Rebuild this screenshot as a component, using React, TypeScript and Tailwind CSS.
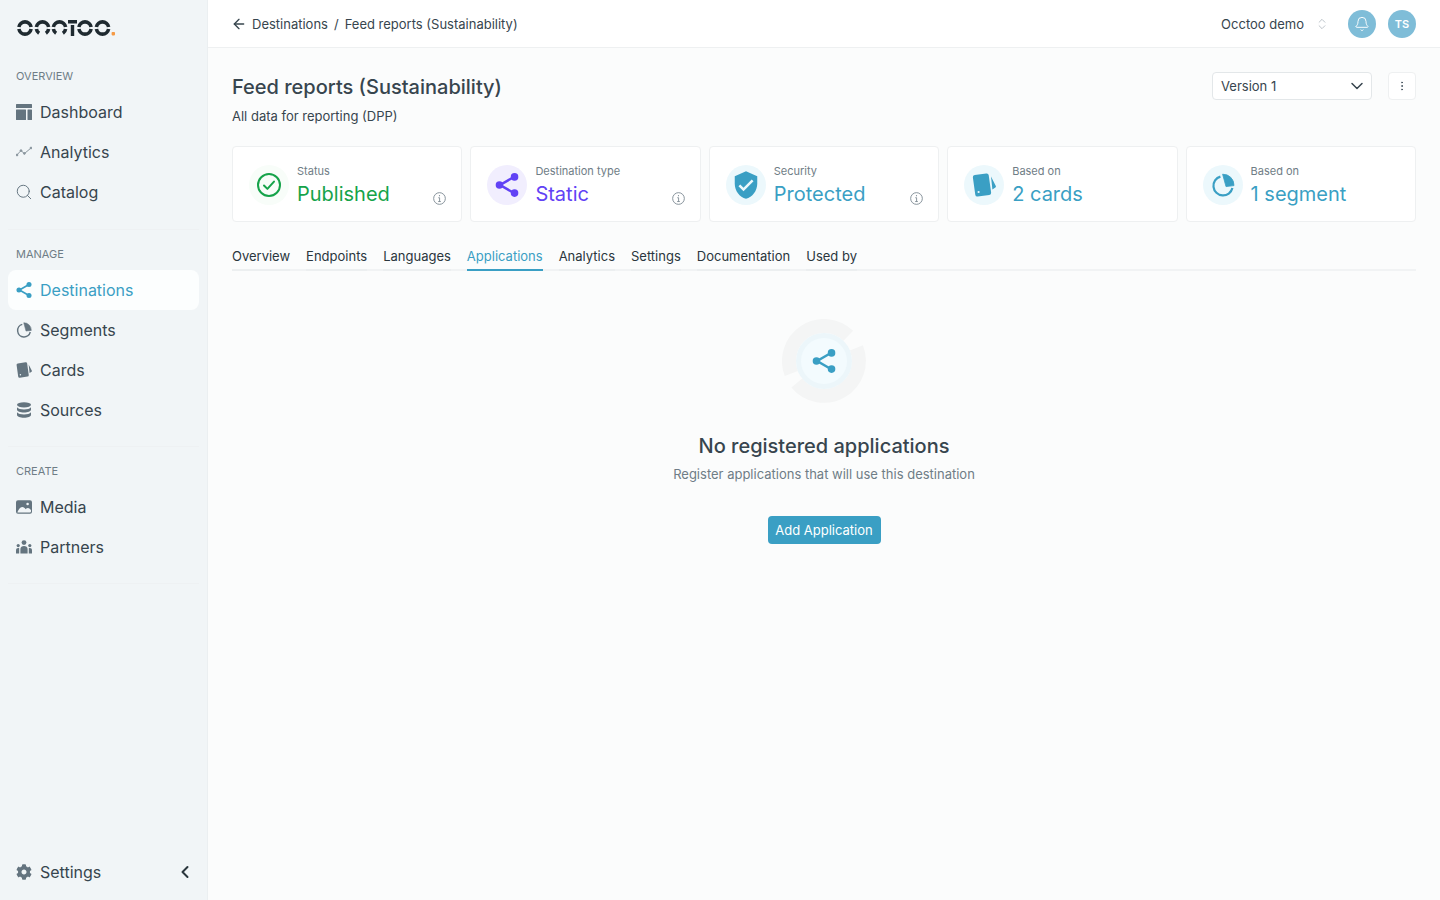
import React from "react";
import { FaCog } from "react-icons/fa";
import { MdVerifiedUser } from "react-icons/md";
import { ArrowLeft, Bell, ChevronDown, ChevronLeft, ChevronsUpDown, MoreVertical, Search } from "lucide-react";

const ShareIcon = ({ className = "" }: { className?: string }) => (
  <svg viewBox="2 1.5 20 21" className={className} fill="currentColor" stroke="currentColor">
    <path d="M18 5 6 12l12 7" fill="none" strokeWidth="2.2" />
    <circle cx="18.6" cy="4.9" r="3.3" stroke="none" />
    <circle cx="5.4" cy="12" r="3.3" stroke="none" />
    <circle cx="18.6" cy="19.1" r="3.3" stroke="none" />
  </svg>
);

const DashboardIcon = () => (
  <svg viewBox="0 0 16 16" className="h-4 w-4 text-[#64747f]" fill="currentColor">
    <rect x="0" y="0" width="16" height="4" rx="0.5" />
    <rect x="0" y="5.5" width="10" height="10.5" rx="0.5" />
    <rect x="11.5" y="5.5" width="4.5" height="10.5" rx="0.5" />
  </svg>
);

const AnalyticsIcon = () => (
  <svg viewBox="0 0 16 16" className="h-4 w-4 text-[#8a969e]" fill="none" stroke="currentColor" strokeWidth="1">
    <path d="M0.8 11 5 6.6l3.4 3L15 4" />
    <circle cx="1" cy="11" r="0.9" fill="currentColor" />
    <circle cx="5" cy="6.6" r="0.9" fill="currentColor" />
    <circle cx="8.4" cy="9.4" r="0.9" fill="currentColor" />
    <circle cx="15" cy="4" r="0.9" fill="currentColor" />
  </svg>
);

const SegmentIcon = ({ className = "" }: { className?: string }) => (
  <svg viewBox="0 0 24 24" className={className} fill="none" stroke="currentColor">
    <path d="M9.4 3.6A9.6 9.6 0 1 0 21.4 15" strokeWidth="2.2" />
    <path d="M11.6 1.2A11 11 0 0 1 23 12.6L15 13.6Z" fill="currentColor" stroke="currentColor" strokeWidth="0.8" strokeLinejoin="round" />
  </svg>
);

const CardsIcon = ({ className = "" }: { className?: string }) => (
  <svg viewBox="0 0 24 24" className={className} fill="currentColor">
    <rect x="2" y="1.2" width="16" height="21.6" rx="2.2" transform="rotate(-8 10 12)" />
    <path d="M19 3.6 23.8 13c.3.6.1 1.2-.4 1.5l-3 2.1Z" />
    <circle cx="6.6" cy="19" r="1.1" fill="#ecf8fc" />
  </svg>
);

const DbIcon = () => (
  <svg viewBox="0 0 16 16" className="h-4 w-4 text-[#64747f]" fill="currentColor">
    <ellipse cx="8" cy="2.8" rx="7" ry="2.6" />
    <path d="M1 5.2c1.2 1.5 3.8 2.2 7 2.2s5.8-.7 7-2.2v2.6c0 1.5-3.1 2.7-7 2.7s-7-1.2-7-2.7Z" />
    <path d="M1 10.2c1.2 1.5 3.8 2.2 7 2.2s5.8-.7 7-2.2v2.8c0 1.5-3.1 2.7-7 2.7s-7-1.2-7-2.7Z" />
  </svg>
);

const MediaIcon = () => (
  <svg viewBox="0 0 16 16" className="h-4 w-4 text-[#64747f]">
    <rect x="0" y="1.2" width="16" height="13.6" rx="2" fill="currentColor" />
    <circle cx="11.6" cy="5" r="1.3" fill="#f1f5f7" />
    <path d="M1.4 13.4c1-3 3-5.4 5-5.4 1.4 0 2.4 1 3.2 2.2.7-.8 1.5-1.2 2.4-1.2 1 0 2 .8 3 2.2v1.4c0 .4-.3.8-.8.8Z" fill="#f1f5f7" />
  </svg>
);

const PartnersIcon = () => (
  <svg viewBox="0 0 16 16" className="h-4 w-4 text-[#64747f]" fill="currentColor">
    <circle cx="8" cy="3.6" r="2.4" />
    <path d="M4.4 10C4.4 8.2 6 7 8 7s3.6 1.2 3.6 3v4.4H4.4Z" />
    <circle cx="2.2" cy="6.6" r="1.6" />
    <circle cx="13.8" cy="6.6" r="1.6" />
    <path d="M0 11.2c0-1.3.9-2.2 2.2-2.2.3 0 .7.1 1 .2v5.2H0Z" />
    <path d="M16 11.2c0-1.3-.9-2.2-2.2-2.2-.3 0-.7.1-1 .2v5.2H16Z" />
  </svg>
);

const InfoIcon = () => (
  <svg viewBox="0 0 12 12" className="h-[13px] w-[13px] text-[#7d8a93]" fill="none" stroke="currentColor" strokeWidth="0.85">
    <circle cx="6" cy="6" r="5.4" />
    <path d="M4.9 5.3H6.1V8.8M4.8 8.8H7.2" />
    <circle cx="6" cy="3.4" r="0.55" fill="currentColor" stroke="none" />
  </svg>
);

const CheckCircle = () => (
  <svg viewBox="0 0 24 24" className="h-6 w-6" fill="none" stroke="#16a34a" strokeWidth="2" strokeLinecap="round" strokeLinejoin="round">
    <circle cx="12" cy="12" r="11" />
    <path d="m7 12.5 3.4 3.4L17 8.6" />
  </svg>
);

const Ring = ({ cx }: { cx: number }) => (
  <path d={`M${cx - 6.1} 7A6.2 6.2 0 0 1 ${cx + 6.1} 7M${cx - 6.1} 9A6.2 6.2 0 0 0 ${cx + 6.1} 9`} />
);
const Cee = ({ cx }: { cx: number }) => (
  <path d={`M${cx - 6.1} 7A6.2 6.2 0 0 1 ${cx + 6.1} 7M${cx - 6.1} 9A6.2 6.2 0 0 0 ${cx - 3.4} 13.2M${cx + 6.1} 9A6.2 6.2 0 0 1 ${cx + 3.4} 13.2`} />
);

const Logo = () => (
  <svg viewBox="0 0 100 16" className="h-4 w-[100px]" fill="none" stroke="#1f2a30" strokeWidth="3.6">
    <Ring cx={9} />
    <Cee cx={26.5} />
    <Cee cx={43.5} />
    <path d="M52 1.8H61M56.5 5V16" strokeWidth="3.4" />
    <Ring cx={69} />
    <Ring cx={86.5} />
    <rect x="95.6" y="12" width="3.4" height="3.4" rx="0.8" fill="#f59a45" stroke="none" />
  </svg>
);

const NavItem = ({ icon, label, active }: { icon: React.ReactNode; label: string; active?: boolean }) => (
  <div className={`flex h-10 items-center gap-2 rounded-lg px-2 text-base ${active ? "bg-[#fcfefe] text-[#3a9fc4]" : "text-[#37454e]"}`}>
    <span className="flex h-4 w-4 shrink-0 items-center justify-center">{icon}</span>
    <span>{label}</span>
  </div>
);

const Section = ({ title, first, children }: { title: string; first?: boolean; children: React.ReactNode }) => (
  <div className={`mb-4 border-b border-[#eef1f3] ${first ? "pb-[17px]" : "pb-4"}`}>
    <div className="mb-2 h-4 px-2 text-[11px] leading-4 text-[#6f7d86]">{title}</div>
    {children}
  </div>
);

const StatCard = ({ icon, circle, label, value, color, info }: { icon: React.ReactNode; circle: string; label: string; value: string; color: string; info?: boolean }) => (
  <div className="relative flex h-[76px] items-center gap-2 rounded border border-[#eef0f1] bg-white px-4 pt-px">
    <div className={`flex h-10 w-10 shrink-0 items-center justify-center rounded-full ${circle}`}>{icon}</div>
    <div className="flex flex-col pt-px">
      <span className="text-[11px] leading-4 text-[#6f7d86]">{label}</span>
      <span className={`mt-px text-xl leading-7 ${color}`}>{value}</span>
    </div>
    {info && <span className="absolute bottom-[16px] right-[15px]"><InfoIcon /></span>}
  </div>
);

const tabs = ["Overview", "Endpoints", "Languages", "Applications", "Analytics", "Settings", "Documentation", "Used by"];

export default function App() {
  return (
    <div className="flex h-screen w-full overflow-hidden bg-[#fbfcfc] font-['Inter',sans-serif] text-[#37454e]">
      <aside className="flex h-full w-[208px] shrink-0 flex-col border-r border-[#ebeff1] bg-[#f1f5f7]">
        <div className="h-[68px] px-4 pt-5">
          <Logo />
        </div>
        <nav className="flex-1 px-2">
          <Section title="OVERVIEW" first>
            <NavItem icon={<DashboardIcon />} label="Dashboard" />
            <NavItem icon={<AnalyticsIcon />} label="Analytics" />
            <NavItem icon={<Search className="h-[18px] w-[18px] shrink-0 text-[#64747f]" strokeWidth={1.3} />} label="Catalog" />
          </Section>
          <Section title="MANAGE">
            <NavItem icon={<ShareIcon className="h-4 w-4 text-[#3a9fc4]" />} label="Destinations" active />
            <NavItem icon={<SegmentIcon className="h-4 w-4 text-[#64747f]" />} label="Segments" />
            <NavItem icon={<CardsIcon className="h-4 w-4 text-[#64747f]" />} label="Cards" />
            <NavItem icon={<DbIcon />} label="Sources" />
          </Section>
          <Section title="CREATE">
            <NavItem icon={<MediaIcon />} label="Media" />
            <NavItem icon={<PartnersIcon />} label="Partners" />
          </Section>
        </nav>
        <div className="flex h-[56px] items-center justify-between pl-4 pr-3 text-base">
          <div className="flex items-center gap-2">
            <FaCog className="h-4 w-4 text-[#64747f]" />
            <span>Settings</span>
          </div>
          <ChevronLeft className="h-5 w-5 text-[#2a363d]" strokeWidth={2.4} />
        </div>
      </aside>

      <main className="flex min-w-0 flex-1 flex-col">
        <header className="flex h-12 shrink-0 items-center justify-between border-b border-[#eef0f1] bg-white px-6 text-[13px]">
          <div className="flex items-center">
            <ArrowLeft className="-ml-px mr-[5px] h-4 w-4 text-[#37454e]" strokeWidth={2} />
            <span className="pt-[2px]">Destinations</span>
            <span className="mx-[6px] pt-[2px]">/</span>
            <span className="pt-[2px]">Feed reports (Sustainability)</span>
          </div>
          <div className="flex items-center">
            <span className="pt-[2px]">Occtoo demo</span>
            <ChevronsUpDown className="ml-[11px] mr-[19px] h-3.5 w-3.5 text-[#b4bcc2]" strokeWidth={1.5} />
            <span className="flex h-7 w-7 items-center justify-center rounded-full bg-[#7fbdd8]">
              <Bell className="h-4 w-4 text-white" strokeWidth={1.4} />
            </span>
            <span className="ml-3 flex h-7 w-7 items-center justify-center rounded-full bg-[#7fbdd8] pt-px text-[11px] font-semibold text-white">TS</span>
          </div>
        </header>

        <div className="flex flex-1 flex-col px-6 pt-6">
          <div className="flex items-start justify-between">
            <div>
              <h1 className="text-xl font-medium leading-[30px]">Feed reports (Sustainability)</h1>
              <p className="mt-1 text-[13px] leading-5">All data for reporting (DPP)</p>
            </div>
            <div className="flex items-center gap-4">
              <div className="flex h-7 w-40 items-center justify-between rounded border border-[#e3e7e9] bg-white pl-2 pr-1 text-[13px]">
                <span className="pt-[2px]">Version 1</span>
                <ChevronDown className="h-5 w-5 text-[#37454e]" strokeWidth={1.8} />
              </div>
              <div className="flex h-7 w-7 items-center justify-center rounded border border-[#eef0f1] bg-white">
                <MoreVertical className="h-3 w-3 text-[#4b5963]" />
              </div>
            </div>
          </div>

          <div className="mt-[20px] grid grid-cols-5 gap-2">
            <StatCard icon={<CheckCircle />} circle="bg-[#f8fdf9]" label="Status" value="Published" color="text-[#16a34a]" info />
            <StatCard icon={<ShareIcon className="h-6 w-6 text-[#6142f5]" />} circle="bg-[#f1eefe]" label="Destination type" value="Static" color="text-[#6142f5]" info />
            <StatCard icon={<MdVerifiedUser className="h-[30px] w-[30px] text-[#3a9fc4]" />} circle="bg-[#ecf8fc]" label="Security" value="Protected" color="text-[#3a9fc4]" info />
            <StatCard icon={<CardsIcon className="h-6 w-6 text-[#3a9fc4]" />} circle="bg-[#ecf8fc]" label="Based on" value="2 cards" color="text-[#3a9fc4]" />
            <StatCard icon={<SegmentIcon className="h-6 w-6 text-[#3a9fc4]" />} circle="bg-[#ecf8fc]" label="Based on" value="1 segment" color="text-[#3a9fc4]" />
          </div>

          <div className="mt-[24px] flex gap-4 border-b-2 border-[#f1f3f4] text-[13px] text-[#2a363d]">
            {tabs.map((t) => (
              <div key={t} className={`-mb-[2px] h-[25px] border-b-2 leading-5 ${t === "Applications" ? "border-[#3a9fc4] text-[#3a9fc4]" : "border-[#eceff0]"}`}>{t}</div>
            ))}
          </div>

          <div className="mt-[48px] flex flex-col items-center">
            <div className="relative flex h-[84px] w-[84px] items-center justify-center">
              <svg viewBox="0 0 84 84" className="absolute inset-0 h-full w-full" fill="none" stroke="#f4f5f5" strokeWidth="14">
                <path d="M66.3 16.8A35 35 0 0 0 9.3 54.5" />
                <path d="M74.4 28.9A35 35 0 0 1 14.8 64" />
              </svg>
              <div className="relative flex h-14 w-14 items-center justify-center rounded-full border-[5px] border-[#ecf6fa] bg-[#f3fbfe]">
                <ShareIcon className="h-6 w-6 text-[#3a9fc4]" />
              </div>
            </div>
            <h2 className="mt-[29px] text-xl font-medium leading-7">No registered applications</h2>
            <p className="mt-[4px] text-[13px] leading-5 text-[#6f7d86]">Register applications that will use this destination</p>
            <button className="mt-[32px] flex h-7 w-[113px] items-center justify-center rounded bg-[#3a9fc4] pt-[2px] text-[13px] text-white">Add Application</button>
          </div>
        </div>
      </main>
    </div>
  );
}
